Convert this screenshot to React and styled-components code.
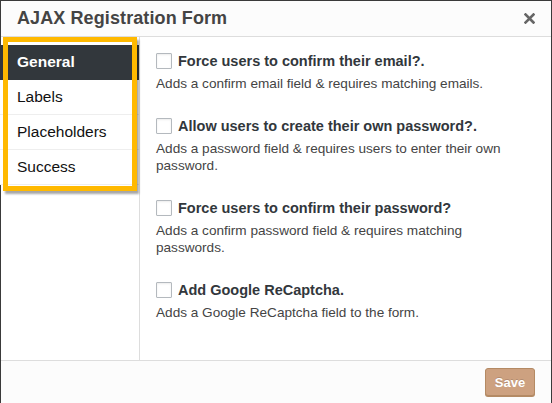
import React, { useState } from 'react'
import styled, { createGlobalStyle } from 'styled-components'

const GlobalStyle = createGlobalStyle`
    html, body {
        margin: 0;
        padding: 0;
        background: #3a3a3a;
        font-family: "Liberation Sans", Arial, sans-serif;
    }
    * { box-sizing: border-box; }
`

const tabs = ['General', 'Labels', 'Placeholders', 'Success'];

const options = [
    {
        label: 'Force users to confirm their email?.',
        desc: 'Adds a confirm email field & requires matching emails.',
    },
    {
        label: 'Allow users to create their own password?.',
        desc: 'Adds a password field & requires users to enter their own password.',
    },
    {
        label: 'Force users to confirm their password?',
        desc: 'Adds a confirm password field & requires matching passwords.',
    },
    {
        label: 'Add Google ReCaptcha.',
        desc: 'Adds a Google ReCaptcha field to the form.',
    },
];

function App() {
    const [activeTab, setActiveTab] = useState('General');
    const [checked, setChecked] = useState({});

    return (
        <>
            <GlobalStyle />
            <Modal>
                <Header>
                    <Title>AJAX Registration Form</Title>
                    <CloseButton aria-label='Close'>
                        <svg width='11' height='11' viewBox='0 0 11 11'>
                            <path d='M1.5 1.5 L9.5 9.5 M9.5 1.5 L1.5 9.5' stroke='#666' strokeWidth='2.6' strokeLinecap='square' />
                        </svg>
                    </CloseButton>
                </Header>
                <Body>
                    <Sidebar>
                        <TabList>
                            {tabs.map((tab) => (
                                <Tab key={tab} $active={tab === activeTab} onClick={() => setActiveTab(tab)}>
                                    {tab}
                                </Tab>
                            ))}
                        </TabList>
                        <Highlight />
                    </Sidebar>
                    <Content>
                        {options.map((opt, i) => (
                            <Option key={opt.label}>
                                <OptionRow>
                                    <Checkbox
                                        type='checkbox'
                                        checked={!!checked[i]}
                                        onChange={() => setChecked({ ...checked, [i]: !checked[i] })}
                                    />
                                    <OptionLabel>{opt.label}</OptionLabel>
                                </OptionRow>
                                <OptionDesc>{opt.desc}</OptionDesc>
                            </Option>
                        ))}
                    </Content>
                </Body>
                <Footer>
                    <SaveButton>Save</SaveButton>
                </Footer>
            </Modal>
        </>
    )
}

export default App

const Modal = styled.div`
    margin: 1px 1px 0 1px;
    height: 402px;
    background: #fff;
    display: flex;
    flex-direction: column;
`

const Header = styled.div`
    height: 36px;
    flex-shrink: 0;
    background: #fcfcfc;
    border-bottom: 1px solid #ddd;
    display: flex;
    align-items: center;
    justify-content: space-between;
    padding: 0 12px 0 16px;
`

const Title = styled.h1`
    margin: 0;
    font-size: 18px;
    font-weight: 700;
    color: #444;
    letter-spacing: 0.1px;
`

const CloseButton = styled.button`
    border: none;
    background: none;
    padding: 4px;
    display: flex;
    cursor: pointer;
`

const Body = styled.div`
    flex: 1;
    display: flex;
    min-height: 0;
`

const Sidebar = styled.div`
    position: relative;
    width: 140px;
    flex-shrink: 0;
    border-right: 1px solid #ddd;
    padding-top: 8px;
    margin-left: -1px;
`

const TabList = styled.div`
    display: flex;
    flex-direction: column;
`

const Tab = styled.div`
    height: 35px;
    display: flex;
    align-items: center;
    padding-left: 17px;
    font-size: 15.5px;
    font-weight: ${(p) => (p.$active ? 600 : 400)};
    color: ${(p) => (p.$active ? '#fff' : '#111')};
    background: ${(p) => (p.$active ? '#32373c' : '#fff')};
    border-bottom: 1px solid ${(p) => (p.$active ? '#32373c' : '#eee')};
    cursor: pointer;
`

const Highlight = styled.div`
    position: absolute;
    left: 3px;
    top: 0;
    width: 134px;
    height: 154px;
    border: 5px solid #ffb900;
    box-shadow: 2px 3px 2px rgba(0, 0, 0, 0.35);
    pointer-events: none;
`

const Content = styled.div`
    flex: 1;
    padding: 16px 24px 0 16px;
    display: flex;
    flex-direction: column;
    gap: 26px;
`

const Option = styled.div`
    display: flex;
    flex-direction: column;
    gap: 6px;
`

const OptionRow = styled.label`
    display: flex;
    align-items: center;
    gap: 6px;
    height: 16px;
`

const Checkbox = styled.input`
    appearance: none;
    margin: 0;
    width: 16px;
    height: 16px;
    border: 1px solid #b4b9be;
    border-radius: 1px;
    background: #fff;
    box-shadow: inset 0 1px 2px rgba(0, 0, 0, 0.08);
    flex-shrink: 0;
`

const OptionLabel = styled.span`
    font-size: 14.5px;
    font-weight: 700;
    color: #32373c;
`

const OptionDesc = styled.p`
    margin: 0;
    font-size: 13.6px;
    line-height: 17px;
    color: #444;
`

const Footer = styled.div`
    height: 43px;
    flex-shrink: 0;
    background: #fcfcfc;
    border-top: 1px solid #ddd;
    display: flex;
    align-items: center;
    justify-content: flex-end;
    padding: 0 16px 0 0;
`

const SaveButton = styled.button`
    width: 50px;
    height: 28px;
    border: 1px solid #b48a64;
    border-radius: 3px;
    background: #cda180;
    color: #fff;
    font-family: "Liberation Sans", Arial, sans-serif;
    font-size: 13px;
    font-weight: 700;
    text-shadow: 0 -1px 0 rgba(0, 0, 0, 0.15);
    box-shadow: 0 1px 0 #b48a64;
    padding: 0;
    cursor: pointer;
`
